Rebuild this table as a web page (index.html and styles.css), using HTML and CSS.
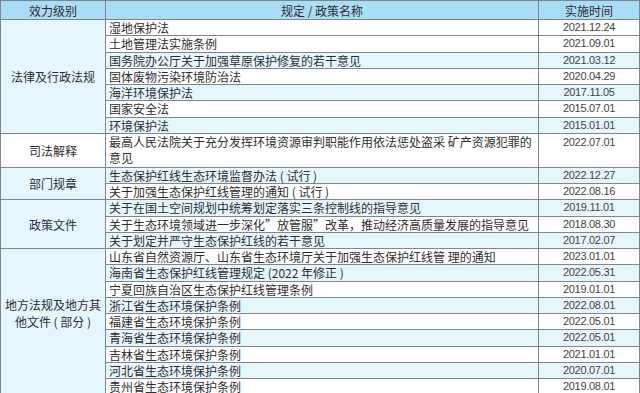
FILE: index.html
```html
<!DOCTYPE html>
<html lang="zh-CN">

<head>
    <meta charset="UTF-8">
    <meta name="viewport" content="width=device-width, initial-scale=1.0">
    <title>政策法规</title>
    <link rel="stylesheet" href="styles.css">
</head>

<body>

    <table class="policy-table">
        <colgroup>
            <col class="col-level">
            <col class="col-name">
            <col class="col-date">
        </colgroup>
        <thead>
            <tr>
                <th>效力级别</th>
                <th>规定 / 政策名称</th>
                <th>实施时间</th>
            </tr>
        </thead>
        <tbody>
            <tr>
                <td class="level alt" rowspan="7">法律及行政法规</td>
                <td class="name">湿地保护法</td>
                <td class="date">2021.12.24</td>
            </tr>
            <tr>
                <td class="name">土地管理法实施条例</td>
                <td class="date">2021.09.01</td>
            </tr>
            <tr class="alt">
                <td class="name">国务院办公厅关于加强草原保护修复的若干意见</td>
                <td class="date">2021.03.12</td>
            </tr>
            <tr>
                <td class="name">固体废物污染环境防治法</td>
                <td class="date">2020.04.29</td>
            </tr>
            <tr class="alt">
                <td class="name">海洋环境保护法</td>
                <td class="date">2017.11.05</td>
            </tr>
            <tr>
                <td class="name">国家安全法</td>
                <td class="date">2015.07.01</td>
            </tr>
            <tr class="alt">
                <td class="name">环境保护法</td>
                <td class="date">2015.01.01</td>
            </tr>

            <tr class="double">
                <td class="level">司法解释</td>
                <td class="name">最高人民法院关于充分发挥环境资源审判职能作用依法惩处盗采 矿产资源犯罪的意见</td>
                <td class="date top">2022.07.01</td>
            </tr>

            <tr class="alt">
                <td class="level" rowspan="2">部门规章</td>
                <td class="name">生态保护红线生态环境监督办法 ( 试行 )</td>
                <td class="date">2022.12.27</td>
            </tr>
            <tr>
                <td class="name">关于加强生态保护红线管理的通知 ( 试行 )</td>
                <td class="date">2022.08.16</td>
            </tr>

            <tr class="alt">
                <td class="level plain" rowspan="3">政策文件</td>
                <td class="name">关于在国土空间规划中统筹划定落实三条控制线的指导意见</td>
                <td class="date">2019.11.01</td>
            </tr>
            <tr>
                <td class="name">关于生态环境领域进一步深化”放管服”改革，推动经济高质量发展的指导意见</td>
                <td class="date">2018.08.30</td>
            </tr>
            <tr class="alt">
                <td class="name">关于划定并严守生态保护红线的若干意见</td>
                <td class="date">2017.02.07</td>
            </tr>

            <tr>
                <td class="level alt local" rowspan="9">地方法规及地方其他文件 ( 部分 )</td>
                <td class="name">山东省自然资源厅、山东省生态环境厅关于加强生态保护红线管 理的通知</td>
                <td class="date">2023.01.01</td>
            </tr>
            <tr class="alt">
                <td class="name">海南省生态保护红线管理规定 (2022 年修正 )</td>
                <td class="date">2022.05.31</td>
            </tr>
            <tr>
                <td class="name">宁夏回族自治区生态保护红线管理条例</td>
                <td class="date">2019.01.01</td>
            </tr>
            <tr class="alt">
                <td class="name">浙江省生态环境保护条例</td>
                <td class="date">2022.08.01</td>
            </tr>
            <tr>
                <td class="name">福建省生态环境保护条例</td>
                <td class="date">2022.05.01</td>
            </tr>
            <tr class="alt">
                <td class="name">青海省生态环境保护条例</td>
                <td class="date">2022.05.01</td>
            </tr>
            <tr>
                <td class="name">吉林省生态环境保护条例</td>
                <td class="date">2021.01.01</td>
            </tr>
            <tr class="alt">
                <td class="name">河北省生态环境保护条例</td>
                <td class="date">2020.07.01</td>
            </tr>
            <tr>
                <td class="name">贵州省生态环境保护条例</td>
                <td class="date">2019.08.01</td>
            </tr>
        </tbody>
    </table>

</body>

</html>
```

FILE: styles.css
```css
body {
    margin: 0;
    padding: 0;
    background-color: #fff;
    font-family: "Noto Sans CJK SC", "Noto Sans", sans-serif;
    font-size: 12px;
    color: #2e2e2e;
}

.policy-table {
    width: 640px;
    border-collapse: collapse;
    table-layout: fixed;
}

.col-level {
    width: 105px;
}

.col-date {
    width: 101px;
}

.policy-table th,
.policy-table td {
    border: 1px solid #7d8790;
    padding: 0 3px;
    line-height: 15px;
    font-weight: normal;
    white-space: nowrap;
    overflow: hidden;
}

.policy-table th {
    height: 18px;
    background-color: #a9dcf5;
    color: #2e2e2e;
    text-align: center;
}

.policy-table tr {
    height: 16.25px;
}

.policy-table tr.alt td,
.policy-table td.alt {
    background-color: #e6f6fe;
}

.policy-table td.plain {
    background-color: #fff;
}

.level {
    text-align: center;
    vertical-align: middle;
}

.local {
    white-space: normal !important;
    line-height: 17px !important;
    padding: 0 4px 17px !important;
}

.name {
    text-align: left;
}

.date {
    text-align: center;
    font-family: "Liberation Sans", Arial, sans-serif;
    font-size: 11px;
    letter-spacing: -0.3px;
    color: #444;
}

.double {
    height: 34px !important;
}

.double .name {
    white-space: normal;
    line-height: 16.5px;
}

.date.top {
    vertical-align: top;
    padding-top: 1px;
}
```
